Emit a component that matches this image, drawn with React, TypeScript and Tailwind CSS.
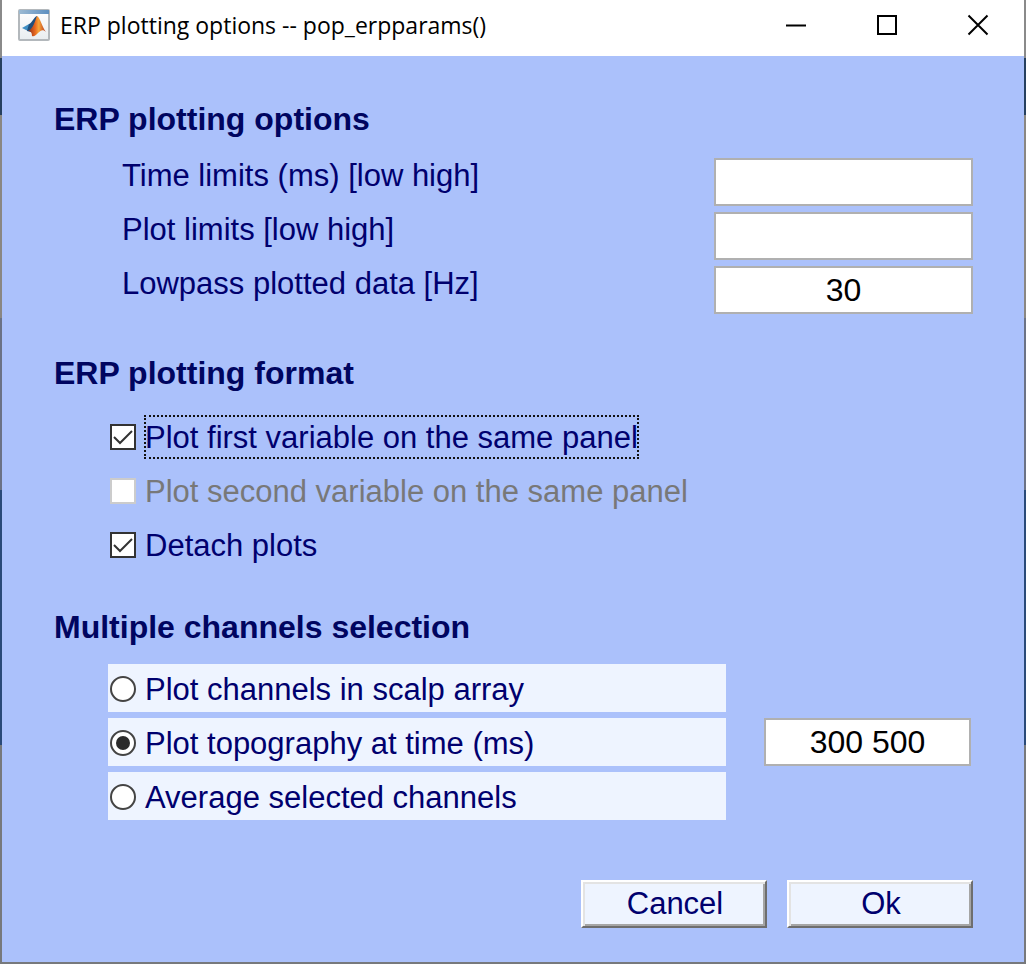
import React, { useState } from "react";

function MatlabIcon() {
  return (
    <svg width="32" height="32" viewBox="0 0 32 32" aria-hidden="true" className="shrink-0">
      <defs>
        <linearGradient id="bar" x1="0" x2="1" y1="0" y2="0">
          <stop offset="0" stopColor="#9dbbd3" />
          <stop offset="1" stopColor="#5d8fc0" />
        </linearGradient>
        <linearGradient id="panel" x1="0" x2="0" y1="0" y2="1">
          <stop offset="0" stopColor="#ffffff" />
          <stop offset="1" stopColor="#e9edf0" />
        </linearGradient>
        <linearGradient id="peak" x1="0" x2="1" y1="0" y2="0">
          <stop offset="0" stopColor="#8c2b18" />
          <stop offset="0.4" stopColor="#e8691f" />
          <stop offset="0.6" stopColor="#f6a53a" />
          <stop offset="1" stopColor="#b8321a" />
        </linearGradient>
      </defs>
      <rect x="1" y="1" width="30" height="30" rx="1" fill="url(#panel)" stroke="#b3b8bc" strokeWidth="2" />
      <rect x="1" y="1" width="30" height="4" fill="url(#bar)" />
      <path d="M4 19 L11 15 L15 18 L10 22 Z" fill="#3f8fc4" />
      <path d="M11 15 C14 14 16 8 19 7 L18 18 L13 23 L9 22 Z" fill="#1f4f7c" />
      <path d="M19 7 C22 8 24 18 28 23 C25 20 23 21 20 24 C18 26 16 28 14 27 C14 24 13 22 10 22 C15 20 17 12 19 7 Z" fill="url(#peak)" />
    </svg>
  );
}

function Heading({ children }: { children: React.ReactNode }) {
  return <h2 className="text-[32px] leading-8 font-bold text-[#000560]">{children}</h2>;
}

const fieldBox =
  "h-12 shrink-0 border-2 border-[#b0b0b0] bg-white text-center text-[32px] leading-8 text-black outline-none";

function Field({ id, label, initial }: { id: string; label: string; initial: string }) {
  const [value, setValue] = useState(initial);
  return (
    <div className="flex items-start justify-between gap-4">
      <label htmlFor={id} className="text-[31px] leading-9">
        {label}
      </label>
      <input
        id={id}
        type="text"
        value={value}
        onChange={(e) => setValue(e.target.value)}
        className={`${fieldBox} w-[259px]`}
      />
    </div>
  );
}

interface CheckProps {
  label: string;
  initial?: boolean;
  disabled?: boolean;
  focused?: boolean;
}

function Check({ label, initial = false, disabled = false, focused = false }: CheckProps) {
  const [checked, setChecked] = useState(initial);
  return (
    <label className="flex h-12 items-center gap-[9px] pt-0.5 pl-0.5">
      <span className="relative flex size-[26px] shrink-0">
        <input
          type="checkbox"
          checked={checked}
          disabled={disabled}
          onChange={(e) => setChecked(e.target.checked)}
          className="size-[26px] appearance-none border-2 border-[#333333] bg-white disabled:border-[#cccccc]"
        />
        {checked && (
          <svg viewBox="0 0 26 26" className="pointer-events-none absolute inset-0 size-[26px]" aria-hidden="true">
            <path d="M4 13 L10 19 L22 7" fill="none" stroke="#333333" strokeWidth="2" />
          </svg>
        )}
      </span>
      <span
        className={`pt-0.5 text-[31px] leading-10 whitespace-nowrap ${disabled ? "text-[#787878]" : ""} ${
          focused ? "outline-2 -outline-offset-1 outline-dotted outline-[#111111]" : ""
        }`}
      >
        {label}
      </span>
    </label>
  );
}

const channelModes = ["Plot channels in scalp array", "Plot topography at time (ms)", "Average selected channels"];

export default function App() {
  const [mode, setMode] = useState(1);
  const [time, setTime] = useState("300 500");

  return (
    <div className="flex min-h-screen flex-col bg-[linear-gradient(#8a8a8a_0_58px,#26405f_58px_115px,#8a8782_115px_318px,#6b7285_318px_490px,#2a4a78_490px_745px,#77797c_745px)] px-0.5 pb-0.5 font-['Liberation_Sans',Arial,sans-serif] text-[#00006e]">
      <header className="flex h-14 items-center bg-white pr-[35px] pb-1.5 pl-4 text-black">
        <MatlabIcon />
        <h1 className="ml-2.5 flex-1 font-['Open_Sans',sans-serif] text-[23px] leading-8 whitespace-nowrap">
          ERP plotting options -- pop_erpparams()
        </h1>
        <div className="flex gap-[69px]">
          <button type="button" aria-label="Minimize">
            <svg width="22" height="22" viewBox="0 0 22 22" className="block">
              <path d="M1 11.5H21" stroke="#000" strokeWidth="2" />
            </svg>
          </button>
          <button type="button" aria-label="Maximize">
            <svg width="22" height="22" viewBox="0 0 22 22" className="block">
              <rect x="2" y="2" width="18" height="18" fill="none" stroke="#000" strokeWidth="2" />
            </svg>
          </button>
          <button type="button" aria-label="Close">
            <svg width="22" height="22" viewBox="0 0 22 22" className="block">
              <path d="M1.500 1.500 L20.500 20.500 M20.500 1.500 L1.500 20.500" stroke="#000" strokeWidth="2" />
            </svg>
          </button>
        </div>
      </header>

      <main className="flex flex-1 flex-col bg-[#abc1fb] pt-[47px] pr-[51px] pb-8 pl-[52px]">
        <section>
          <Heading>ERP plotting options</Heading>
          <div className="mt-[23px] flex flex-col gap-1.5 pl-[68px]">
            <Field id="time-limits" label="Time limits (ms) [low high]" initial="" />
            <Field id="plot-limits" label="Plot limits [low high]" initial="" />
            <Field id="lowpass" label="Lowpass plotted data [Hz]" initial="30" />
          </div>
        </section>

        <section className="mt-[43px]">
          <Heading>ERP plotting format</Heading>
          <div className="mt-[23px] flex flex-col items-start gap-1.5 pl-[54px]">
            <Check label="Plot first variable on the same panel" initial focused />
            <Check label="Plot second variable on the same panel" disabled />
            <Check label="Detach plots" initial />
          </div>
        </section>

        <section className="mt-[43px]">
          <Heading>Multiple channels selection</Heading>
          <div className="mt-[21px] flex items-center gap-[38px] pr-0.5 pl-[54px]">
            <div className="flex flex-1 flex-col gap-1.5" role="radiogroup" aria-label="Multiple channels selection">
              {channelModes.map((label, i) => (
                <label key={label} className="flex h-12 items-center gap-[9px] bg-[#eef4ff] pt-0.5 pl-0.5">
                  <span className="relative flex size-[26px] shrink-0">
                    <input
                      type="radio"
                      name="channel-mode"
                      checked={mode === i}
                      onChange={() => setMode(i)}
                      className="size-[26px] appearance-none rounded-full border-2 border-[#444444] bg-white"
                    />
                    {mode === i && (
                      <span className="pointer-events-none absolute inset-1.5 rounded-full bg-[#2b2b2b]" />
                    )}
                  </span>
                  <span className="pt-0.5 text-[31px] leading-10 whitespace-nowrap">{label}</span>
                </label>
              ))}
            </div>
            <input
              type="text"
              aria-label="Topography time (ms)"
              value={time}
              onChange={(e) => setTime(e.target.value)}
              className={`${fieldBox} w-[207px]`}
            />
          </div>
        </section>

        <div className="mt-[60px] flex justify-end gap-5">
          {["Cancel", "Ok"].map((name) => (
            <button
              key={name}
              type="button"
              className="h-12 w-[186px] border-2 border-t-white border-r-[#6e6e6e] border-b-[#6e6e6e] border-l-white bg-[#eef4ff] pl-0.5 text-[31px] leading-8 shadow-[inset_2px_2px_0_#e3e3e3,inset_-2px_-2px_0_#a5a5a5]"
            >
              {name}
            </button>
          ))}
        </div>
      </main>
    </div>
  );
}
